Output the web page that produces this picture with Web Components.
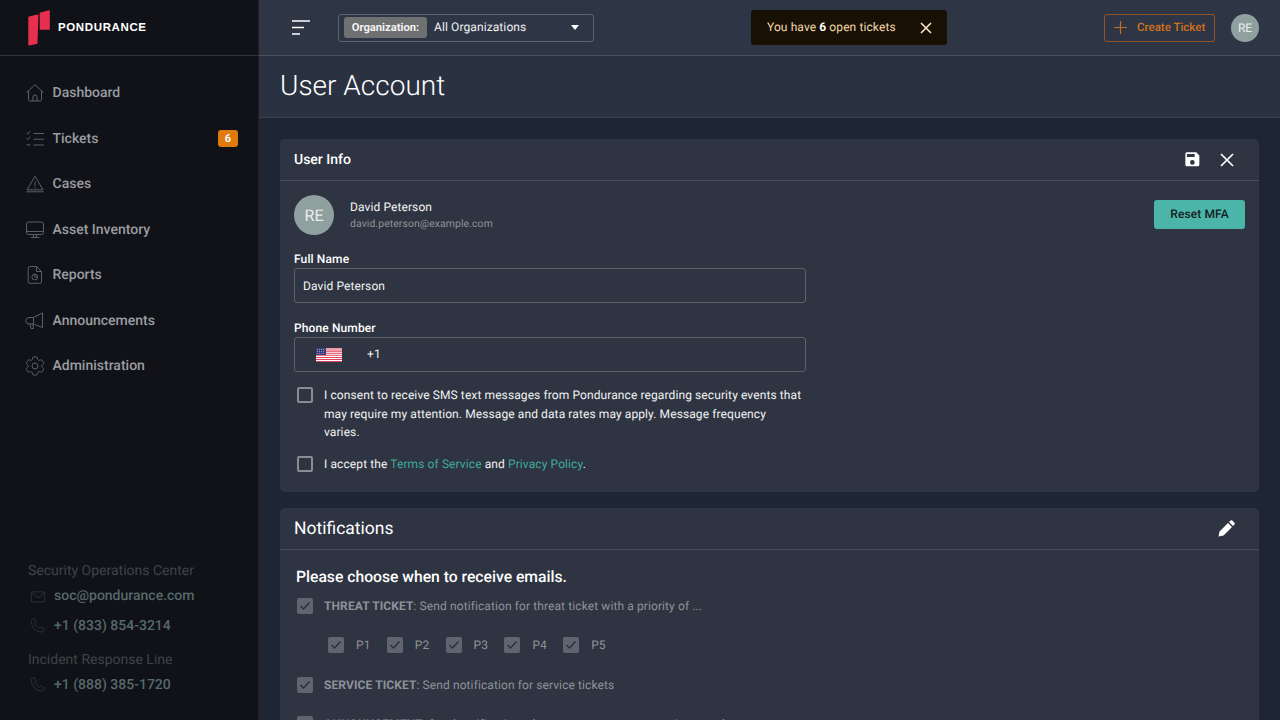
<!DOCTYPE html>
<html lang="en">
<head>
<meta charset="utf-8">
<title>User Account</title>
<style>
  html, body { margin: 0; height: 720px; overflow: hidden; background: #1f2633; font-family: Roboto, "Liberation Sans", sans-serif; text-rendering: geometricPrecision; }
</style>
</head>
<body>
<p-app></p-app>
<script>
// Icons, all drawn on an 18 unit box
const icons = {
  home: '<path d="M.5 8.500 9 .8l8.500 7.700M2.500 6.800V15.500a1.500 1.500 0 0 0 1.500 1.500h10a1.500 1.500 0 0 0 1.500-1.500V6.800M7 17v-4a2 2 0 0 1 4 0v4"/>',
  tickets: '<path d="M.5 2.800l1.300 1.300L4.200 1M.5 8.500l1.300 1.300 2.400-3M.5 14.800h3.700M7.500 3.500H18M7.500 9.200H18M7.500 15H18"/>',
  cases: '<path d="M9 1.200 1 14.800h16zM9 6.500v4.500M9 12v1.300M.3 16.800h17.400"/>',
  assets: '<rect x=".5" y="1" width="17" height="12.500" rx="2"/><path d="M.5 10.500h17M7.500 13.500v2.800M10.500 13.500v2.800M4.500 16.500h9"/>',
  reports: '<path d="M4 .5h6.500L15.500 5.500V15.500a1.800 1.800 0 0 1-1.800 1.800H4a1.800 1.800 0 0 1-1.800-1.800V2.300A1.800 1.800 0 0 1 4 .5zM10.500.5v5h5"/><circle cx="8.800" cy="11" r="2.900"/><path d="M8.800 8.100V11h2.900"/>',
  announce: '<path d="M16.500 1v14.500L7.500 12H3a2.500 2.500 0 0 1 0-6.500h4.500zM7.500 5.500V12M4 12l1 4.500h2.500L6.800 12"/>',
  gear: '<g transform="translate(-3 -3)"><circle cx="12" cy="12" r="3"/><path d="M9.594 3.940c.09-.542.56-.94 1.110-.94h2.593c.55 0 1.020.398 1.110.940l.213 1.281c.063.374.313.686.645.870.074.040.147.083.22.127.325.196.72.257 1.075.124l1.217-.456a1.125 1.125 0 0 1 1.370.49l1.296 2.247a1.125 1.125 0 0 1-.26 1.431l-1.003.827c-.293.241-.438.613-.43.992a7.723 7.723 0 0 1 0 .255c-.008.378.137.75.43.991l1.004.827c.424.35.534.955.26 1.430l-1.298 2.247a1.125 1.125 0 0 1-1.369.491l-1.217-.456c-.355-.133-.75-.072-1.076.124a6.470 6.470 0 0 1-.22.128c-.331.183-.581.495-.644.869l-.213 1.281c-.09.543-.56.94-1.110.94h-2.594c-.55 0-1.019-.398-1.110-.94l-.213-1.281c-.062-.374-.312-.686-.644-.87a6.520 6.520 0 0 1-.22-.127c-.325-.196-.72-.257-1.076-.124l-1.217.456a1.125 1.125 0 0 1-1.369-.49l-1.297-2.247a1.125 1.125 0 0 1 .26-1.431l1.004-.827c.292-.24.437-.613.43-.991a6.932 6.932 0 0 1 0-.255c.007-.38-.138-.751-.43-.992l-1.004-.827a1.125 1.125 0 0 1-.26-1.430l1.297-2.247a1.125 1.125 0 0 1 1.370-.491l1.216.456c.356.133.751.072 1.076-.124.072-.044.146-.086.22-.128.332-.183.582-.495.644-.869l.214-1.280z"/></g>',
  mail: '<rect x="2.500" y="5.500" width="15" height="11" rx="1"/><path d="M2.500 6.500 10 12l7.500-5.500"/>',
  phone: '<path d="M3.500 2.500 6 2l2 3.700-1.500 1.500c.8 2 2.600 4 5 5.300l1.500-1.500 4 2-.8 2.700c-.3.700-1 1-1.700 1C7.500 16.700 2.500 11 2.500 4.200c0-.7.400-1.400 1-1.700z"/>'
};

function svgIcon(name, size, box) {
  return `<svg width="${size}" height="${size}" viewBox="0 0 ${box} ${box}" fill="none" stroke="currentColor" stroke-width="1" overflow="visible">${icons[name]}</svg>`;
}

// Sidebar row
class NavItem extends HTMLElement {
  constructor() {
    super();
    this.attachShadow({ mode: 'open' });
  }
  connectedCallback() {
    const { icon, badge } = this.dataset;
    this.shadowRoot.innerHTML = `
      <style>
        :host { display: flex; align-items: center; height: 45.5px; padding: 0 20px 0 26px; color: #9a9ca1; }
        svg { color: #5d5f65; flex: none; }
        .label { margin-left: 8.5px; font-size: 14px; font-weight: 500; flex: 1; }
        .badge { width: 20px; height: 17px; border-radius: 3px; background: #df7a0c; color: #fff; font-size: 11px; font-weight: 700; display: flex; align-items: center; justify-content: center; }
      </style>
      ${svgIcon(icon, 18, 18)}
      <span class="label"><slot></slot></span>
      ${badge ? `<span class="badge">${badge}</span>` : ''}
    `;
  }
}
customElements.define('p-nav-item', NavItem);

class ContactLine extends HTMLElement {
  constructor() {
    super();
    this.attachShadow({ mode: 'open' });
  }
  connectedCallback() {
    this.shadowRoot.innerHTML = `
      <style>
        :host { display: flex; align-items: center; height: 30px; color: #56696c; font-size: 14px; font-weight: 500; }
        svg { color: #2d3438; margin: 0 7.5px 0 .5px; flex: none; }
      </style>
      ${svgIcon(this.dataset.icon, 18, 20)}<slot></slot>
    `;
  }
}
customElements.define('p-contact-line', ContactLine);

class AppSidebar extends HTMLElement {
  constructor() {
    super();
    this.attachShadow({ mode: 'open' });
  }
  connectedCallback() {
    this.shadowRoot.innerHTML = `
      <style>
        :host { display: flex; flex-direction: column; width: 258px; height: 720px; background: #101217; border-right: 1px solid #1b1e25; flex: none; }
        .brand { height: 55px; display: flex; align-items: center; padding-left: 28px; border-bottom: 1px solid #33363c; }
        .brand svg { flex: none; }
        .brand span { color: #fff; font-family: "Liberation Sans", sans-serif; font-weight: 700; font-size: 11.5px; letter-spacing: .62px; margin-left: 7px; }
        nav { padding-top: 14.5px; }
        .foot { margin-top: auto; padding: 0 0 20px 28px; }
        .head { color: #3f4347; font-size: 14px; height: 20px; line-height: 20px; }
        .head.two { margin-top: 9.5px; }
      </style>
      <div class="brand">
        <svg width="23" height="36" viewBox="0 0 23 36"><path d="M1 6.500 9.500 4.500c.6-.1.900.200.900.800L9.500 33c0 .5-.3.800-.8.900L1.200 35.500c-.6.100-.9-.200-.9-.800V7.300c0-.4.300-.7.700-.8z" fill="#e8304e"/><path d="M12.500 2.500 21 .3c.5-.1.800.100.800.700v18c0 .5-.3.800-.8.800h-8.500c-.5 0-.8-.3-.8-.8V3.300c0-.4.300-.7.800-.8z" fill="#e8304e"/></svg>
        <span>PONDURANCE</span>
      </div>
      <nav>
        <p-nav-item data-icon="home">Dashboard</p-nav-item>
        <p-nav-item data-icon="tickets" data-badge="6">Tickets</p-nav-item>
        <p-nav-item data-icon="cases">Cases</p-nav-item>
        <p-nav-item data-icon="assets">Asset Inventory</p-nav-item>
        <p-nav-item data-icon="reports">Reports</p-nav-item>
        <p-nav-item data-icon="announce">Announcements</p-nav-item>
        <p-nav-item data-icon="gear">Administration</p-nav-item>
      </nav>
      <div class="foot">
        <div class="head">Security Operations Center</div>
        <p-contact-line data-icon="mail">soc@pondurance.com</p-contact-line>
        <p-contact-line data-icon="phone">+1 (833) 854-3214</p-contact-line>
        <div class="head two">Incident Response Line</div>
        <p-contact-line data-icon="phone">+1 (888) 385-1720</p-contact-line>
      </div>
    `;
  }
}
customElements.define('p-sidebar', AppSidebar);

class Avatar extends HTMLElement {
  constructor() {
    super();
    this.attachShadow({ mode: 'open' });
  }
  connectedCallback() {
    const size = this.dataset.size || 28;
    this.shadowRoot.innerHTML = `
      <style>
        :host { display: flex; align-items: center; justify-content: center; flex: none; width: ${size}px; height: ${size}px; border-radius: 50%; background: #90a09f; color: #e9eded; font-size: ${size > 30 ? 16 : 12}px; }
      </style>
      <slot></slot>
    `;
  }
}
customElements.define('p-avatar', Avatar);

class TopBar extends HTMLElement {
  constructor() {
    super();
    this.attachShadow({ mode: 'open' });
  }
  connectedCallback() {
    this.shadowRoot.innerHTML = `
      <style>
        :host { display: flex; align-items: center; height: 55px; flex: none; background: #2e3645; border-bottom: 1px solid #4a505c; padding: 0 21px 0 33px; color: #fff; }
        .menu { width: 18px; height: 15px; flex: none; margin-right: 28px; }
        .org { display: flex; align-items: center; width: 256px; height: 28px; border: 1px solid #5f6570; border-radius: 3px; box-sizing: border-box; padding-left: 5px; font-size: 12px; letter-spacing: .1px; flex: none; }
        .org b { background: #6e7071; color: #f3f3f3; border-radius: 3px; height: 21px; width: 83px; display: flex; align-items: center; justify-content: center; font-size: 11.2px; font-weight: 700; letter-spacing: 0; }
        .org span { margin-left: 7px; flex: 1; color: #f0f1f2; padding-bottom: 2px; }
        .org i { border: 4.5px solid transparent; border-top: 5px solid #fff; border-bottom: 0; margin-right: 14px; }
        .toast { margin-left: 157px; width: 196px; height: 35px; box-sizing: border-box; background: #181005; border-radius: 3px; display: flex; align-items: center; padding-left: 16px; color: #f3d9ad; font-size: 12px; letter-spacing: .1px; flex: none; }
        .toast span { padding-bottom: 2px; }
        .toast b { color: #fff; }
        .toast svg { margin-left: auto; margin-right: 15px; }
        .create { margin-left: auto; width: 111px; height: 28px; box-sizing: border-box; border: 1px solid #92562a; border-radius: 3px; display: flex; align-items: center; color: #d2711a; font-size: 11.5px; font-weight: 500; padding-left: 9px; gap: 10px; }
        .create span { padding-bottom: 2px; }
        p-avatar { margin-left: 16px; }
      </style>
      <svg class="menu" viewBox="0 0 18 15" stroke="#fff" stroke-width="1.3"><path d="M0 1h18M0 7.500h12M0 14h8"/></svg>
      <div class="org"><b>Organization:</b><span>All Organizations</span><i></i></div>
      <div class="toast"><span>You have <b>6</b> open tickets</span>
        <svg width="12" height="12" viewBox="0 0 12 12" stroke="#fbe6c3" stroke-width="1.6"><path d="M1 1l10 10M11 1 1 11"/></svg>
      </div>
      <div class="create">
        <svg width="13" height="13" viewBox="0 0 13 13" stroke="#c56d20" stroke-width="1.2"><path d="M6.500 0v13M0 6.500h13"/></svg>
        <span>Create Ticket</span>
      </div>
      <p-avatar>RE</p-avatar>
    `;
  }
}
customElements.define('p-topbar', TopBar);

// Card with a title row and an actions slot
class InfoCard extends HTMLElement {
  constructor() {
    super();
    this.attachShadow({ mode: 'open' });
  }
  connectedCallback() {
    const big = this.dataset.big !== undefined;
    this.shadowRoot.innerHTML = `
      <style>
        :host { display: block; background: #2e3441; border-radius: 5px; color: #fff; }
        header { display: flex; align-items: center; height: 41px; padding: 0 14px; border-bottom: 1px solid #484c58; }
        h2 { margin: 0; flex: 1; font-size: ${big ? 17.5 : 14}px; font-weight: ${big ? 400 : 500}; }
        .actions { display: flex; align-items: center; gap: 18px; margin-right: 11px; }
      </style>
      <header><h2>${this.dataset.title}</h2><div class="actions"><slot name="actions"></slot></div></header>
      <slot></slot>
    `;
  }
}
customElements.define('p-card', InfoCard);

class FormField extends HTMLElement {
  constructor() {
    super();
    this.attachShadow({ mode: 'open' });
  }
  connectedCallback() {
    this.shadowRoot.innerHTML = `
      <style>
        :host { display: block; width: 512px; }
        label { display: block; font-size: 12px; letter-spacing: .12px; font-weight: 500; height: 18px; line-height: 18px; color: #fff; }
        .box { display: flex; align-items: center; height: 35px; box-sizing: border-box; border: 1px solid #5c616c; border-radius: 3px; padding-left: 8px; font-size: 12px; letter-spacing: .1px; color: #f1f2f3; }
      </style>
      <label>${this.dataset.label}</label>
      <div class="box"><slot></slot></div>
    `;
  }
}
customElements.define('p-field', FormField);

class CheckRow extends HTMLElement {
  constructor() {
    super();
    this.attachShadow({ mode: 'open' });
  }
  connectedCallback() {
    const checked = this.hasAttribute('checked');
    this.shadowRoot.innerHTML = `
      <style>
        :host { display: flex; align-items: flex-start; font-size: 12px; line-height: 18.5px; letter-spacing: .1px; color: ${checked ? '#8e929a' : '#f1f2f3'}; }
        .box { width: 16px; height: 16px; box-sizing: border-box; margin: 1px var(--check-gap, 11px) 0 var(--check-indent, 1px); border-radius: 2px; flex: none; border: 2px solid ${checked ? '#5f6470' : '#8a8c90'}; background: ${checked ? '#5f6470' : 'transparent'}; }
        .box svg { display: block; }
      </style>
      <span class="box">${checked ? '<svg width="12" height="12" viewBox="0 0 12 12" fill="none" stroke="#2a2f3a" stroke-width="1.4"><path d="M1.500 6l3 3 6-6.500"/></svg>' : ''}</span>
      <span><slot></slot></span>
    `;
  }
}
customElements.define('p-check', CheckRow);

class UserInfo extends HTMLElement {
  constructor() {
    super();
    this.attachShadow({ mode: 'open' });
  }
  connectedCallback() {
    this.shadowRoot.innerHTML = `
      <style>
        :host { display: block; padding: 14px 14px 18.5px; }
        .who { display: flex; align-items: center; height: 40px; }
        .name { margin-left: 16px; flex: 1; font-size: 12px; letter-spacing: .1px; color: #f1f2f3; }
        .name small { display: block; color: #8e929a; font-size: 10.4px; margin-top: 3px; }
        .mfa { width: 91px; height: 29px; background: #4cb5aa; border-radius: 3px; color: #14201f; font-size: 12px; letter-spacing: .1px; font-weight: 500; display: flex; align-items: center; justify-content: center; margin-top: -2px; }
        p-field { margin-top: 15px; }
        p-field + p-field { margin-top: 16px; }
        p-check { width: 508px; margin-top: 14px; --check-indent: 3px; }
        p-check + p-check { margin-top: 13.5px; }
        .cc { margin-left: 13px; width: 26px; height: 14px; flex: none; }
        .dial { margin-left: 25px; padding-bottom: 1px; }
        a { color: #3fa99d; text-decoration: none; }
      </style>
      <div class="who">
        <p-avatar data-size="40">RE</p-avatar>
        <div class="name">David Peterson<small>david.peterson@example.com</small></div>
        <div class="mfa">Reset MFA</div>
      </div>
      <p-field data-label="Full Name">David Peterson</p-field>
      <p-field data-label="Phone Number">
        <svg class="cc" viewBox="0 0 26 14"><rect width="26" height="14" fill="#fff"/><path d="M0 1h26M0 3.100h26M0 5.200h26M0 7.300h26M0 9.400h26M0 11.500h26M0 13.500h26" stroke="#e0405a" stroke-width="1.05"/><rect width="10" height="7" fill="#3c3f7e"/><path d="M1 1.500h8M1 3.500h8M1 5.500h8" stroke="#a8aad0" stroke-width=".8" stroke-dasharray="1 1"/></svg>
        <span class="dial">+1</span>
      </p-field>
      <p-check>I consent to receive SMS text messages from Pondurance regarding security events that may require my attention. Message and data rates may apply. Message frequency varies.</p-check>
      <p-check>I accept the <a>Terms of Service</a> and <a>Privacy Policy</a>.</p-check>
    `;
  }
}
customElements.define('p-user-info', UserInfo);

class Notifications extends HTMLElement {
  constructor() {
    super();
    this.attachShadow({ mode: 'open' });
  }
  connectedCallback() {
    this.shadowRoot.innerHTML = `
      <style>
        :host { display: block; padding: 17px 14px 0 16px; }
        h3 { margin: 0 0 10px; font-size: 15.7px; font-weight: 500; color: #fff; line-height: 20px; }
        .pri { display: flex; margin: 20.5px 0 21px 31px; --check-gap: 12px; }
        .pri p-check { width: 58.8px; }
        b { font-weight: 700; }
        .row { margin-bottom: 21px; }
      </style>
      <h3>Please choose when to receive emails.</h3>
      <p-check checked><b>THREAT TICKET</b>: Send notification for threat ticket with a priority of ...</p-check>
      <div class="pri">
        <p-check checked>P1</p-check><p-check checked>P2</p-check><p-check checked>P3</p-check><p-check checked>P4</p-check><p-check checked>P5</p-check>
      </div>
      <p-check class="row" checked><b>SERVICE TICKET</b>: Send notification for service tickets</p-check>
      <p-check checked><b>ANNOUNCEMENT</b>: Send notification when a new announcement is posted</p-check>
    `;
  }
}
customElements.define('p-notifications', Notifications);

class AppShell extends HTMLElement {
  constructor() {
    super();
    this.attachShadow({ mode: 'open' });
  }
  connectedCallback() {
    this.shadowRoot.innerHTML = `
      <style>
        :host { display: flex; width: 1280px; height: 720px; overflow: hidden; }
        main { flex: 1; min-width: 0; display: flex; flex-direction: column; }
        .title { height: 62px; background: #2a3140; border-bottom: 1px solid #3b414d; display: flex; align-items: center; padding: 0 0 2px 21px; box-sizing: border-box; flex: none; }
        h1 { margin: 0; font-size: 28px; font-weight: 300; color: #fff; }
        .body { padding: 21px 21px 0 21px; display: flex; flex-direction: column; gap: 16px; }
        .act { display: block; flex: none; }
      </style>
      <p-sidebar></p-sidebar>
      <main>
        <p-topbar></p-topbar>
        <div class="title"><h1>User Account</h1></div>
        <div class="body">
          <p-card data-title="User Info">
            <svg class="act" slot="actions" width="18.7" height="18.7" viewBox="0 0 24 24" fill="#fff"><path d="M17 3H5a2 2 0 0 0-2 2v14a2 2 0 0 0 2 2h14a2 2 0 0 0 2-2V7zm-5 16a3 3 0 1 1 0-6 3 3 0 0 1 0 6zm3-10H5V5h10z"/></svg>
            <svg class="act" slot="actions" width="14" height="14" viewBox="0 0 14 14" stroke="#fff" stroke-width="1.7"><path d="M1 1l12 12M13 1 1 13"/></svg>
            <p-user-info></p-user-info>
          </p-card>
          <p-card data-title="Notifications" data-big>
            <svg class="act" slot="actions" width="17" height="17" viewBox="0 0 17 17" fill="#fff" style="margin-right:-.5px"><path d="M.5 16.500 1.500 11.500 10 3l4 4-8.500 8.500zM11 2 12.500.6a1.300 1.300 0 0 1 1.800 0l2.100 2.100a1.300 1.300 0 0 1 0 1.800L15 6z"/></svg>
            <p-notifications></p-notifications>
          </p-card>
        </div>
      </main>
    `;
  }
}
customElements.define('p-app', AppShell);
</script>
</body>
</html>
